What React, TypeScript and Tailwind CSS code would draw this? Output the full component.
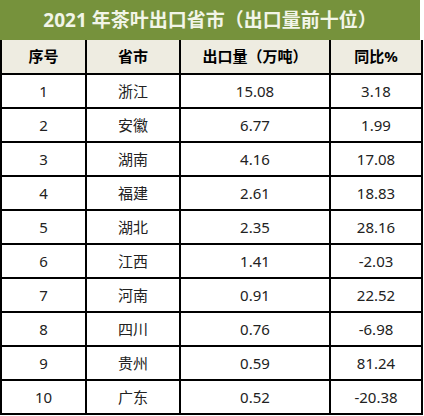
const rows = [
  ["1", "浙江", "15.08", "3.18"],
  ["2", "安徽", "6.77", "1.99"],
  ["3", "湖南", "4.16", "17.08"],
  ["4", "福建", "2.61", "18.83"],
  ["5", "湖北", "2.35", "28.16"],
  ["6", "江西", "1.41", "-2.03"],
  ["7", "河南", "0.91", "22.52"],
  ["8", "四川", "0.76", "-6.98"],
  ["9", "贵州", "0.59", "81.24"],
  ["10", "广东", "0.52", "-20.38"],
];

const font = {
  fontFamily: '"Noto Sans", "Noto Sans CJK SC", sans-serif',
};

const Row = ({ cells, head }: { cells: string[]; head?: boolean }) => (
  <div
    className={`grid grid-cols-[85px_94px_150px_90px] border-b-2 border-black ${
      head ? "h-[35px] bg-[#eeece1] font-bold text-black text-[15px]" : "h-[34px] text-[#222] text-[15px]"
    }`}
  >
    {cells.map((c, i) => (
      <div
        key={i}
        className={`flex items-center justify-center ${i < 3 ? "border-r-2 border-black" : ""}`}
      >
        {c}
      </div>
    ))}
  </div>
);

export default function App() {
  return (
    <div className="w-[424px] h-[416px] bg-white" style={font}>
      <div className="h-[40px] w-[420px] bg-[#76923c] flex items-center justify-center text-[#f2f5e8] font-bold text-[19px]">
        2021 年茶叶出口省市（出口量前十位）
      </div>
      <div className="w-[423px] border-l-2 border-r-2 border-black">
        <Row head cells={["序号", "省市", "出口量（万吨）", "同比%"]} />
        {rows.map((r) => (
          <Row key={r[0]} cells={r} />
        ))}
      </div>
    </div>
  );
}
